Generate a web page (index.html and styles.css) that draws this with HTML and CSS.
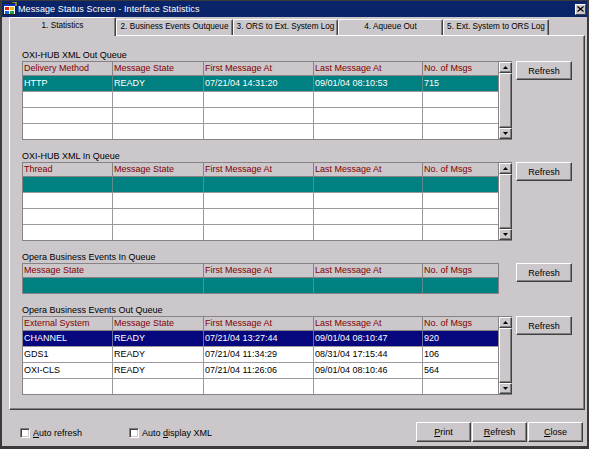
FILE: index.html
```html
<!DOCTYPE html>
<html>
<head>
<meta charset="utf-8">
<title>Message Status Screen - Interface Statistics</title>
<link rel="stylesheet" href="styles.css">
</head>
<body>
<div class="window">
  <div class="titlebar">
    <svg class="app-icon" viewBox="0 0 14 14" width="14" height="14">
      <rect x="0.5" y="1.5" width="12" height="11" fill="#fff" stroke="#202020"/>
      <rect x="1" y="2" width="11" height="2" fill="#1030c0"/>
      <rect x="2" y="5" width="4" height="3" fill="#e02020"/>
      <rect x="7" y="5" width="4" height="3" fill="#f0c000"/>
      <rect x="2" y="9" width="4" height="3" fill="#2060e0"/>
      <rect x="7" y="9" width="4" height="3" fill="#20a040"/>
      <path d="M9 0 L13 0 L13 4" fill="none" stroke="#f0d000" stroke-width="1"/>
    </svg>
    <span class="title">Message Status Screen - Interface Statistics</span>
    <span class="close-btn"><svg width="7" height="6" viewBox="0 0 7 6"><path d="M0.5 0.5 L6.5 5.5 M6.5 0.5 L0.5 5.5" stroke="#000" stroke-width="1.3" fill="none"/></svg></span>
  </div>

  <div class="tabs">
    <div class="tab tab-active tab-1">1. Statistics</div>
    <div class="tab tab-2">2. Business Events Outqueue</div>
    <div class="tab tab-3">3. ORS to Ext. System Log</div>
    <div class="tab tab-4">4. Aqueue Out</div>
    <div class="tab tab-5">5. Ext. System to ORS Log</div>
  </div>

  <div class="panel">
    <section class="section">
      <div class="sec-label">OXI-HUB XML Out Queue</div>
      <div class="sec-body">
        <div class="grid">
          <div class="row hdr"><div>Delivery Method</div><div>Message State</div><div>First Message At</div><div>Last Message At</div><div>No. of Msgs</div></div>
          <div class="row teal"><div>HTTP</div><div>READY</div><div>07/21/04 14:31:20</div><div>09/01/04 08:10:53</div><div>715</div></div>
          <div class="row"><div></div><div></div><div></div><div></div><div></div></div>
          <div class="row"><div></div><div></div><div></div><div></div><div></div></div>
          <div class="row"><div></div><div></div><div></div><div></div><div></div></div>
        </div>
        <div class="scrollbar">
          <div class="sb-btn"><svg width="5" height="3" viewBox="0 0 5 3"><polygon points="0,3 5,3 2.5,0" fill="#000"/></svg></div>
          <div class="sb-thumb"></div>
          <div class="sb-btn"><svg width="5" height="3" viewBox="0 0 5 3"><polygon points="0,0 5,0 2.5,3" fill="#000"/></svg></div>
        </div>
        <button class="btn refresh-btn">Refresh</button>
      </div>
    </section>

    <section class="section">
      <div class="sec-label">OXI-HUB XML In Queue</div>
      <div class="sec-body">
        <div class="grid">
          <div class="row hdr"><div>Thread</div><div>Message State</div><div>First Message At</div><div>Last Message At</div><div>No. of Msgs</div></div>
          <div class="row teal"><div></div><div></div><div></div><div></div><div></div></div>
          <div class="row"><div></div><div></div><div></div><div></div><div></div></div>
          <div class="row"><div></div><div></div><div></div><div></div><div></div></div>
          <div class="row"><div></div><div></div><div></div><div></div><div></div></div>
        </div>
        <div class="scrollbar">
          <div class="sb-btn"><svg width="5" height="3" viewBox="0 0 5 3"><polygon points="0,3 5,3 2.5,0" fill="#000"/></svg></div>
          <div class="sb-thumb"></div>
          <div class="sb-btn"><svg width="5" height="3" viewBox="0 0 5 3"><polygon points="0,0 5,0 2.5,3" fill="#000"/></svg></div>
        </div>
        <button class="btn refresh-btn">Refresh</button>
      </div>
    </section>

    <section class="section">
      <div class="sec-label">Opera Business Events In Queue</div>
      <div class="sec-body">
        <div class="grid">
          <div class="row row-4 hdr"><div>Message State</div><div>First Message At</div><div>Last Message At</div><div>No. of Msgs</div></div>
          <div class="row row-4 teal"><div></div><div></div><div></div><div></div></div>
        </div>
        <div class="sb-spacer"></div>
        <button class="btn refresh-btn">Refresh</button>
      </div>
    </section>

    <section class="section">
      <div class="sec-label">Opera Business Events Out Queue</div>
      <div class="sec-body">
        <div class="grid">
          <div class="row hdr"><div>External System</div><div>Message State</div><div>First Message At</div><div>Last Message At</div><div>No. of Msgs</div></div>
          <div class="row sel"><div>CHANNEL</div><div>READY</div><div>07/21/04 13:27:44</div><div>09/01/04 08:10:47</div><div>920</div></div>
          <div class="row"><div>GDS1</div><div>READY</div><div>07/21/04 11:34:29</div><div>08/31/04 17:15:44</div><div>106</div></div>
          <div class="row"><div>OXI-CLS</div><div>READY</div><div>07/21/04 11:26:06</div><div>09/01/04 08:10:46</div><div>564</div></div>
          <div class="row"><div></div><div></div><div></div><div></div><div></div></div>
        </div>
        <div class="scrollbar">
          <div class="sb-btn"><svg width="5" height="3" viewBox="0 0 5 3"><polygon points="0,3 5,3 2.5,0" fill="#000"/></svg></div>
          <div class="sb-thumb"></div>
          <div class="sb-btn"><svg width="5" height="3" viewBox="0 0 5 3"><polygon points="0,0 5,0 2.5,3" fill="#000"/></svg></div>
        </div>
        <button class="btn refresh-btn">Refresh</button>
      </div>
    </section>
  </div>

  <div class="footer">
    <label class="check check-first"><span class="box"></span><span><span class="u">A</span>uto refresh</span></label>
    <label class="check"><span class="box"></span><span>Auto <span class="u">d</span>isplay XML</span></label>
    <div class="footer-buttons">
      <button class="btn fbtn"><span class="u">P</span>rint</button>
      <button class="btn fbtn"><span class="u">R</span>efresh</button>
      <button class="btn fbtn"><span class="u">C</span>lose</button>
    </div>
  </div>
</div>
</body>
</html>
```

FILE: styles.css
```css
* { box-sizing: border-box; }

html, body {
  margin: 0;
  padding: 0;
}

body {
  font-family: "Liberation Sans", Arial, sans-serif;
  font-size: 9px;
  color: #000;
  background: #cbc7cb;
}

.window {
  width: 589px;
  height: 449px;
  background: #cbc7cb;
  border-style: solid;
  border-color: #3a3a3a;
  border-width: 1px 2px 3px 2px;
  display: flex;
  flex-direction: column;
  overflow: hidden;
}

/* title bar */
.titlebar {
  height: 16px;
  flex: none;
  background: #0a246a;
  color: #fff;
  display: flex;
  align-items: center;
  padding: 0 1px 0 1px;
}

.app-icon {
  flex: none;
  margin-right: 1px;
}

.title {
  flex: 1;
  font-size: 9px;
  white-space: nowrap;
  letter-spacing: 0.1px;
}

.close-btn {
  width: 11px;
  height: 11px;
  flex: none;
  background: #cbc7cb;
  border: 1px solid;
  border-color: #fff #404040 #404040 #fff;
  display: flex;
  align-items: center;
  justify-content: center;
}

/* tabs */
.tabs {
  height: 18px;
  flex: none;
  display: flex;
  align-items: flex-end;
  padding-left: 7px;
  font-size: 8.2px;
}

.tab {
  height: 16px;
  line-height: 14px;
  text-align: center;
  white-space: nowrap;
  background: #cbc7cb;
  border-top: 1px solid #fff;
  border-left: 1px solid #fff;
  border-right: 1px solid #404040;
  box-shadow: inset -1px 0 0 #808080;
  border-radius: 2px 2px 0 0;
  flex: none;
}

.tab-active {
  height: 19px;
  line-height: 16px;
  margin-bottom: -1px;
  position: relative;
  z-index: 1;
}

.tab-1 { width: 107px; }
.tab-2 { width: 117px; }
.tab-3 { width: 105px; }
.tab-4 { width: 105px; }
.tab-5 { width: 106px; }

/* main panel */
.panel {
  flex: none;
  margin-left: 7px;
  width: 576px;
  height: 375px;
  border: 1px solid;
  border-color: #fff #404040 #404040 #fff;
  box-shadow: inset -1px -1px 0 #808080;
  padding: 13px 0 0 12px;
  display: flex;
  flex-direction: column;
  gap: 10px;
}

.sec-label {
  height: 12px;
  line-height: 12px;
  white-space: nowrap;
}

.sec-body {
  display: flex;
  align-items: flex-start;
}

.grid {
  flex: none;
  width: 477px;
  border: 1px solid #868286;
  background: #fff;
}

.row {
  display: grid;
  grid-template-columns: 90px 91px 110px 109px 75px;
  height: 16px;
  border-bottom: 1px solid #9c989c;
}

.row:last-child {
  height: 15px;
  border-bottom: 0;
}

.row > div {
  border-right: 1px solid #9c989c;
  padding-left: 1px;
  line-height: 15px;
  white-space: nowrap;
  overflow: hidden;
}

.row > div:last-child {
  border-right: 0;
}

.row-4 {
  grid-template-columns: 181px 110px 109px 75px;
}

.hdr {
  height: 14px;
  background: #cbc7cb;
  color: #840000;
  border-bottom-color: #868286;
}

.hdr > div {
  line-height: 13px;
  border-right-color: #868286;
}

.teal {
  background: #008080;
  color: #fff;
}

.teal > div {
  border-right-color: #5c8c8c;
}

.sel {
  background: #08087e;
  color: #fff;
}

.sel > div {
  border-right-color: #6a6aa0;
}

/* scrollbar */
.scrollbar {
  flex: none;
  width: 13px;
  height: 79px;
  display: flex;
  flex-direction: column;
  background: #dcd8dc;
  border-top: 1px solid #808080;
  border-bottom: 1px solid #808080;
}

.sb-btn,
.sb-thumb {
  background: #cbc7cb;
  border: 1px solid;
  border-color: #fff #404040 #404040 #fff;
  box-shadow: inset -1px -1px 0 #808080;
}

.sb-btn {
  height: 11px;
  flex: none;
  display: flex;
  align-items: center;
  justify-content: center;
}

.sb-btn svg {
  display: block;
}

.sb-thumb {
  flex: 1;
}

.sb-spacer {
  flex: none;
  width: 13px;
}

/* buttons */
.btn {
  font-family: inherit;
  font-size: 9px;
  color: #000;
  background: #cbc7cb;
  border: 1px solid;
  border-color: #fff #404040 #404040 #fff;
  box-shadow: inset -1px -1px 0 #808080;
  padding: 0;
  margin: 0;
  border-radius: 0;
  display: flex;
  align-items: center;
  justify-content: center;
  white-space: nowrap;
}

.refresh-btn {
  flex: none;
  margin-left: 4px;
  width: 56px;
  height: 19px;
}

.u {
  text-decoration: underline;
}

/* footer */
.footer {
  flex: 1;
  display: flex;
  align-items: flex-start;
  padding: 0 4px 0 18px;
}

.check {
  display: flex;
  align-items: center;
  margin-top: 17px;
  height: 12px;
  white-space: nowrap;
}

.check-first {
  width: 109px;
}

.box {
  width: 10px;
  height: 10px;
  margin-right: 3px;
  background: #fff;
  border: 1px solid;
  border-color: #808080 #fff #fff #808080;
  box-shadow: inset 1px 1px 0 #404040, inset -1px -1px 0 #cbc7cb;
}

.footer-buttons {
  margin-left: auto;
  margin-top: 12px;
  display: flex;
  gap: 1px;
}

.fbtn {
  width: 55px;
  height: 20px;
}
```
